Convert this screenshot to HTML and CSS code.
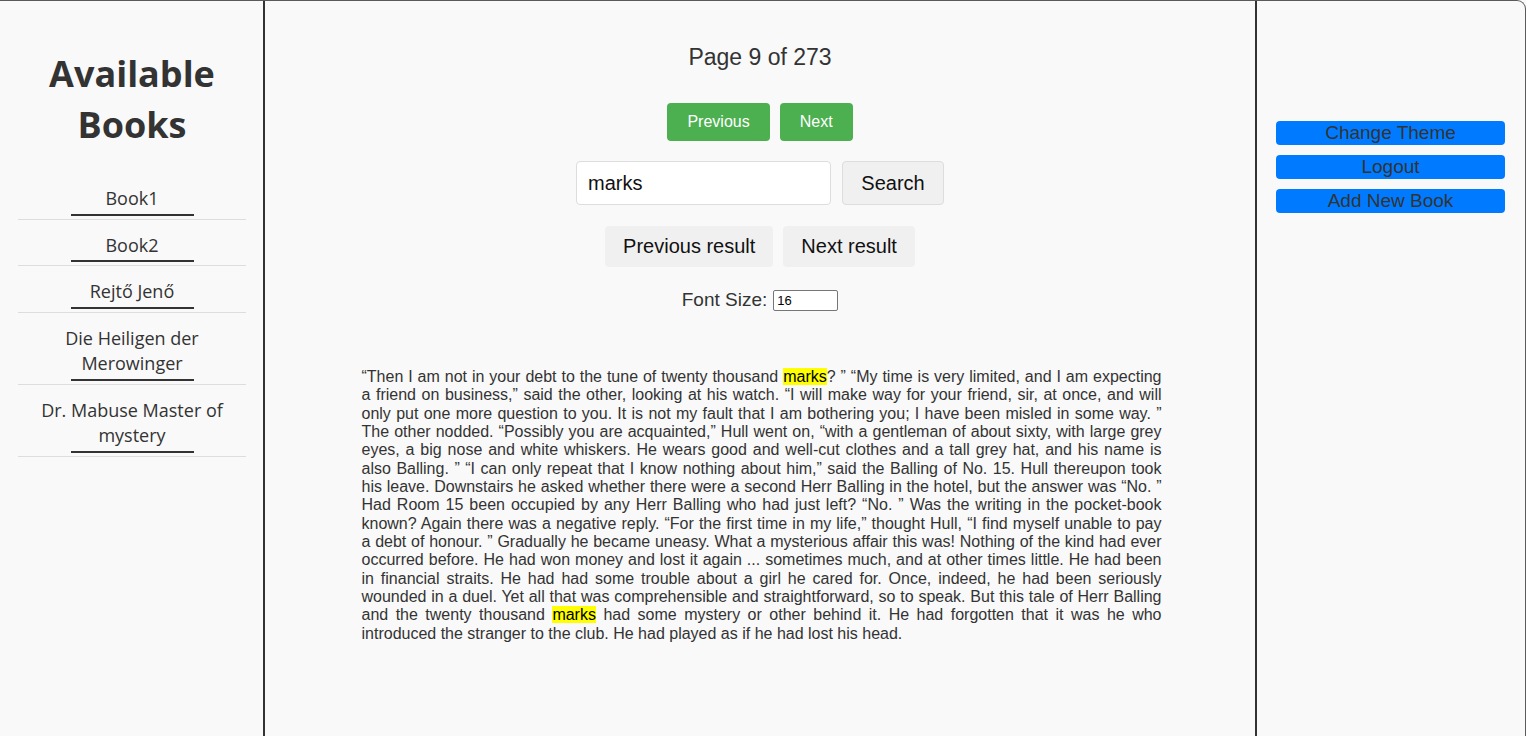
FILE: index.html
```html
<!DOCTYPE html>
<html lang="en">
<head>
<meta charset="utf-8">
<title>Reader</title>
<link rel="stylesheet" href="styles.css">
</head>
<body>
<div class="app">
  <aside class="sidebar">
    <h1 class="sidebar-title">Available Books</h1>
    <ul class="book-list">
      <li class="book-item"><a class="book-link" href="#">Book1</a></li>
      <li class="book-item"><a class="book-link" href="#">Book2</a></li>
      <li class="book-item"><a class="book-link" href="#">Rejtő Jenő</a></li>
      <li class="book-item"><a class="book-link" href="#">Die Heiligen der Merowinger</a></li>
      <li class="book-item"><a class="book-link" href="#">Dr. Mabuse Master of mystery</a></li>
    </ul>
  </aside>
  <main class="reader">
    <div class="page-info">Page 9 of 273</div>
    <div class="row nav-row">
      <button class="btn-green">Previous</button>
      <button class="btn-green">Next</button>
    </div>
    <div class="row search-row">
      <input class="search-input" type="text" value="marks">
      <button class="btn-search">Search</button>
    </div>
    <div class="row result-row">
      <button class="btn-result">Previous result</button>
      <button class="btn-result">Next result</button>
    </div>
    <div class="row font-row">
      <label class="font-label">Font Size:</label>
      <input class="font-input" type="number" value="16">
    </div>
    <p class="book-text">“Then I am not in your debt to the tune of twenty thousand <mark class="hl">marks</mark>? ” “My time is very limited, and I am expecting a friend on business,” said the other, looking at his watch. “I will make way for your friend, sir, at once, and will only put one more question to you. It is not my fault that I am bothering you; I have been misled in some way. ” The other nodded. “Possibly you are acquainted,” Hull went on, “with a gentleman of about sixty, with large grey eyes, a big nose and white whiskers. He wears good and well-cut clothes and a tall grey hat, and his name is also Balling. ” “I can only repeat that I know nothing about him,” said the Balling of No. 15. Hull thereupon took his leave. Downstairs he asked whether there were a second Herr Balling in the hotel, but the answer was “No. ” Had Room 15 been occupied by any Herr Balling who had just left? “No. ” Was the writing in the pocket-book known? Again there was a negative reply. “For the first time in my life,” thought Hull, “I find myself unable to pay a debt of honour. ” Gradually he became uneasy. What a mysterious affair this was! Nothing of the kind had ever occurred before. He had won money and lost it again ... sometimes much, and at other times little. He had been in financial straits. He had had some trouble about a girl he cared for. Once, indeed, he had been seriously wounded in a duel. Yet all that was comprehensible and straightforward, so to speak. But this tale of Herr Balling and the twenty thousand <mark class="hl">marks</mark> had some mystery or other behind it. He had forgotten that it was he who introduced the stranger to the club. He had played as if he had lost his head.</p>
  </main>
  <aside class="actions">
    <button class="btn-blue">Change Theme</button>
    <button class="btn-blue">Logout</button>
    <button class="btn-blue">Add New Book</button>
  </aside>
</div>
</body>
</html>
```

FILE: styles.css
```css
* { box-sizing: border-box; }

html, body {
  margin: 0;
  padding: 0;
  height: 100%;
  background: #f9f9f9;
}

body {
  font-family: "Liberation Sans", Arial, sans-serif;
  color: #333;
  overflow: hidden;
}

.app {
  display: flex;
  height: 100vh;
  border-top: 1px solid #5a5a5a;
  border-right: 1px solid #5a5a5a;
  border-top-right-radius: 9px;
  background: #f9f9f9;
}

/* Left sidebar */
.sidebar {
  width: 265px;
  flex: none;
  border-right: 2px solid #333;
  padding: 47px 17px 0 18px;
  font-family: "Open Sans", "Noto Sans", sans-serif;
}

.sidebar-title {
  margin: 0 0 23px;
  text-align: center;
  font-size: 36px;
  line-height: 51px;
  font-weight: 700;
  color: #333;
}

.book-list {
  list-style: none;
  margin: 0;
  padding: 0;
}

.book-item {
  padding: 13px 0 3px;
  border-bottom: 1px solid #ddd;
  text-align: center;
}

.book-link {
  display: block;
  color: #333;
  text-decoration: none;
  font-size: 18px;
  line-height: 25.5px;
}

.book-link::after {
  content: "";
  display: block;
  width: 123px;
  height: 2px;
  margin: 2px auto 0;
  background: #333;
}

/* Main reader */
.reader {
  flex: 1;
  min-width: 0;
  border-right: 2px solid #333;
  padding-top: 42px;
  display: flex;
  flex-direction: column;
  align-items: center;
}

.page-info {
  font-size: 23px;
  line-height: 28px;
  color: #333;
}

.row {
  display: flex;
  justify-content: center;
  align-items: center;
  gap: 10px;
}

.nav-row { margin-top: 32px; }

.btn-green {
  font-family: "Liberation Sans", Arial, sans-serif;
  font-size: 16px;
  line-height: 18px;
  height: 38px;
  padding: 0 20px;
  border: none;
  border-radius: 4px;
  background: #4caf50;
  color: #fff;
}

.search-row {
  margin-top: 20px;
  gap: 11px;
}

.search-input {
  width: 255px;
  height: 44px;
  padding: 0 11px;
  border: 1px solid #ddd;
  border-radius: 4px;
  background: #fff;
  font-family: "Liberation Sans", Arial, sans-serif;
  font-size: 20px;
  color: #111;
}

.btn-search {
  width: 102px;
  height: 44px;
  padding: 0;
  border: 1px solid #ddd;
  border-radius: 4px;
  background: #f0f0f0;
  font-family: "Liberation Sans", Arial, sans-serif;
  font-size: 20px;
  color: #111;
}

.result-row { margin-top: 21px; }

.btn-result {
  height: 41px;
  padding: 0 18px;
  border: none;
  border-radius: 4px;
  background: #f0f0f0;
  font-family: "Liberation Sans", Arial, sans-serif;
  font-size: 20px;
  color: #111;
}

.font-row {
  margin-top: 22px;
  gap: 6px;
}

.font-label {
  font-size: 19px;
  color: #333;
}

.font-input {
  width: 65px;
  height: 21px;
  padding: 1px 3px;
  border: 1px solid #767676;
  border-radius: 2px;
  background: #fff;
  font-family: "Liberation Sans", Arial, sans-serif;
  font-size: 13px;
  color: #000;
  -moz-appearance: textfield;
}

.font-input::-webkit-inner-spin-button,
.font-input::-webkit-outer-spin-button {
  -webkit-appearance: none;
  margin: 0;
}

.book-text {
  width: 800px;
  margin: 57px 0 0 3px;
  font-size: 16px;
  line-height: 18.35px;
  text-align: justify;
  color: #333;
}

.hl {
  background: #ffff00;
  color: #000;
}

/* Right actions */
.actions {
  width: 268px;
  flex: none;
  padding: 120px 20px 0 19px;
  display: flex;
  flex-direction: column;
  gap: 10px;
}

.btn-blue {
  height: 24px;
  padding: 0;
  border: none;
  border-radius: 4px;
  background: #007bff;
  font-family: "Liberation Sans", Arial, sans-serif;
  font-size: 19px;
  line-height: 22px;
  color: #333;
}
```
